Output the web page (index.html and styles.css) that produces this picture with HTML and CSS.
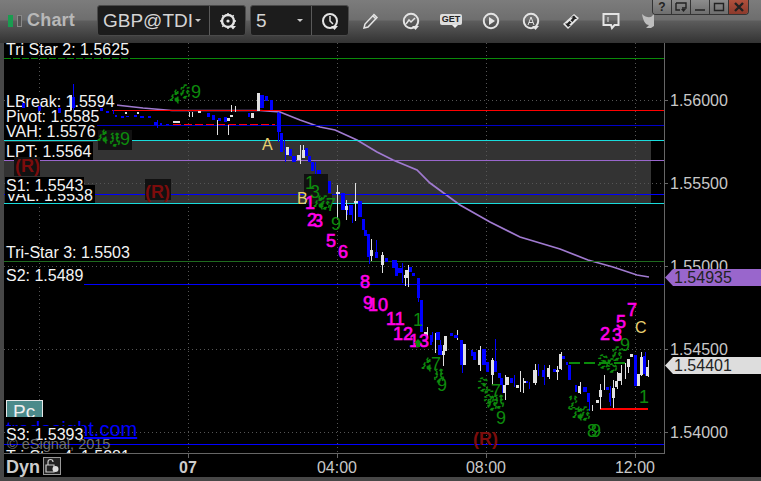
FILE: index.html
```html
<!DOCTYPE html>
<html lang="en">
<head>
<meta charset="utf-8">
<title>Chart</title>
<link rel="stylesheet" href="styles.css">
</head>
<body>
<div class="window">
  <header class="toolbar">
    <div class="leds"><span class="led led-on"></span><span class="led"></span></div>
    <div class="title">Chart</div>
    <div class="group group-symbol">
      <div class="field field-symbol"><span class="field-text">GBP@TDI</span><span class="caret"></span></div>
      <div class="tool">
        <svg class="ico" viewBox="0 0 18 18"><circle cx="9" cy="9" r="6" class="st24"/><circle cx="9" cy="9" r="1.600" class="fillw"/><path class="st15" d="M9 1v1.500M1 9h1.500M15.500 9H17M3.300 3.300l1 1M14.700 3.300l-1 1M4.300 13.700l-1 1M9 15.500V17"/><path class="fillw" d="M11 14h6l-3 3.500z"/></svg>
      </div>
    </div>
    <div class="group group-interval">
      <div class="field field-interval"><span class="field-text">5</span><span class="caret"></span></div>
      <div class="tool">
        <svg class="ico" viewBox="0 0 18 18"><circle cx="9" cy="9" r="7" class="st2"/><path class="st15" d="M9 4v5l3 3"/><path class="fillw" d="M10 14h7l-3.500 4z"/></svg>
      </div>
    </div>
    <div class="icons">
      <div class="cell"><svg class="ico" viewBox="0 0 18 18"><path class="st15" d="M2 16l1-4L12 2.500l3 3L6 15zM11 4l3 3"/></svg></div>
      <div class="cell"><svg class="ico" viewBox="0 0 18 18"><circle cx="9" cy="9" r="7.200" class="st2"/><path class="st15" d="M4 12l3-4 2 2 4-4"/><path class="fillw" d="M10 14h7l-3.500 4z"/></svg></div>
      <div class="cell cell-get"><span class="get">GET</span><span class="caret caret-get"></span></div>
      <div class="cell"><svg class="ico" viewBox="0 0 18 18"><circle cx="9" cy="9" r="7.200" class="st2"/><path class="fillw" d="M7 5l6 4-6 4z"/></svg></div>
      <div class="cell"><svg class="ico" viewBox="0 0 18 18"><circle cx="9" cy="9" r="7.200" class="st2"/><path class="st1" d="M6 13l3-8 3 8M7 10.500h4"/><path class="fillw" d="M10 14h7l-3.500 4z"/></svg></div>
      <div class="cell"><svg class="ico" viewBox="0 0 18 18"><path class="fillw" d="M1 12L12 2l5 4L6 17z"/><path class="filld" d="M12 3.500l3 3.500h-2l-2.500 3-2-1.500 2.500-3h-2zM6 15l-3-3.500h2l2.500-2.500 2 1.500-2.500 2.500h2z"/></svg></div>
      <div class="cell"><svg class="ico" viewBox="0 0 18 18"><path class="st2" d="M1.500 2h15v11h-4l-2.500 3-1-3h-7.500z"/><path class="st1" d="M6 5v5"/></svg></div>
      <div class="cell cell-bird"><svg class="ico" viewBox="0 0 18 18"><path class="fillg" d="M3 2c3 3 6 3.500 9 3l3-3v12l-3 2H7l3-3C6 13 4 8 3 2z"/></svg></div>
    </div>
    <div class="winbtns">
      <div class="winbtn">?</div>
      <div class="winbtn"><svg class="wico" viewBox="0 0 12 10"><path class="stb" d="M1 1h10v5H7M1 1v7h4"/><path class="fillb" d="M6 7h5l-2.500 3z"/></svg></div>
      <div class="winbtn"><svg class="wico" viewBox="0 0 12 10"><path class="stb" d="M1 8h10"/></svg></div>
      <div class="winbtn"><svg class="wico" viewBox="0 0 12 10"><path class="stb" d="M1.500 1.500h9v7h-9z"/></svg></div>
      <div class="winbtn winbtn-close"><svg class="wico" viewBox="0 0 12 10"><path class="stx" d="M2 1l8 8M10 1l-8 8"/></svg></div>
    </div>
  </header>
  <main class="chart">
    <svg class="canvas" viewBox="4 43 757 434" width="757" height="434">
      <defs><clipPath id="plot"><rect x="4" y="43" width="660" height="410"/></clipPath></defs>
      <rect class="band" x="4" y="140" width="647" height="63"/>
      <path class="grid" d="M39 43V453M188 43V453M337 43V453M486 43V453M635 43V453M4 100H664M4 183H664M4 266H664M4 349H664M4 432H664"/>

      <polyline class="ma" points="116,105 143,108 172,110.500 260,110.500 280,112 300,120 320,127 335,130 357,140 377,152 393,160 417,170 430,183 460,205 490,222 520,237 560,249 588,260 613,267 637,275 649,277"/>

      <g class="lines">
        <path class="l-green" d="M4 58.500H130"/><path class="l-green-d" d="M130 58.500H664"/>
        <path class="l-blue2" d="M97 125.500H664"/>
        <path class="l-red" d="M112 110.500H664"/>
        <path class="l-red-d" d="M173 124.500H275"/>
        <path class="l-cyan" d="M4 140.500H664"/>
        <path class="l-purple" d="M4 160.500H664"/>
        <path class="l-blue" d="M4 194.500H664"/>
        <path class="l-cyan" d="M4 203.500H664"/>
        <path class="l-tri" d="M4 261.500H664"/>
        <path class="l-blue" d="M84 284.500H664"/>
        <path class="l-blue" d="M4 444.500H664"/>
        <path class="l-green-dash" d="M569 362.500H630"/>
        <path class="l-red2" d="M600 408.500H648"/>
      </g>

      <g clip-path="url(#plot)">
        <rect class="pc" x="6.500" y="400.500" width="36" height="22"/>
        <text class="pc-text" x="13" y="418">Pc</text>
        <rect class="cover" x="4" y="417" width="140" height="8"/>
        <text class="site" x="6" y="436">tradesight.com</text>
        <g class="lab">
          <text x="6" y="55">Tri Star 2: 1.5625</text>
          <rect class="label-bg" x="5" y="94" width="112" height="15"/>
          <text x="6" y="107">LBreak: 1.5594</text>
          <rect class="label-bg" x="5" y="124" width="92" height="14"/>
          <text x="6" y="137">VAH: 1.5576</text>
          <rect class="label-bg" x="5" y="109" width="95" height="15"/>
          <text x="6" y="122">Pivot: 1.5585</text>
          <rect class="label-bg" x="5" y="142" width="88" height="18"/>
          <text x="6" y="157">LPT: 1.5564</text>
          <rect class="label-bg" x="5" y="185" width="90" height="18"/>
          <text x="6" y="201">VAL: 1.5538</text>
          <rect class="label-bg" x="5" y="177" width="79" height="17"/>
          <text x="6" y="191">S1: 1.5543</text>
          <text x="6" y="258">Tri-Star 3: 1.5503</text>
          <rect class="label-bg" x="5" y="268" width="80" height="16"/>
          <text x="6" y="281">S2: 1.5489</text>
          <rect class="label-bg" x="5" y="426" width="79" height="14"/>
          <text x="6" y="440">S3: 1.5393</text>
          <text x="6" y="462">Tri-Star 4: 1.5281</text>
        </g>
        <text class="copy" x="7" y="449">© eSignal, 2015</text>
      </g>

      <path class="wick-b" d="M73 84v26M157 120v8M113 110v4M284 150v-10M285 150v12M315 162v15M320 170v17M278 112v30M347 205v10M352 215v8M364 219v12M369 250v14M376 240v16M396 260v12M402 263v20M418 280v22M432 332v10M440 340v5M462 365v8M495 339v25M502 378v15M514 375v12M529 382v7M538 364v12M544 365v20M589 395v16M610 386v20M645 352v24"/>
      <path class="wick-w" d="M189 112v5M192 112v5M217 120v15M228 125v10M231 112v-7M235 112v-6M300 145v19M303 145v10M337 185v34M346 200v20M355 183v38M371 239v22M382 252v21M405 270v16M408 265v22M427 327v11M435 333v20M443 345v21M457 330v10M480 346v25M492 358v27M505 375v25M520 371v21M523 378v15M535 364v21M549 365v14M557 366v14M561 352v18M568 365v3M580 382v12M592 405v6M600 384v25M604 375v15M613 380v28M617 372v17M621 365v20M625 363v16M628 359v14M641 352v24M648 360v17"/>
      <path class="body-b" d="M72 97h3v11h-3zM22 103h3v5h-3zM38 106h3v5h-3zM58 108h3v5h-3zM100 108h3v3h-3zM106 111h3v2h-3zM115 115h2v2h-2zM121 116h3v2h-3zM126 116h3v1h-3zM134 115h3v2h-3zM140 116h4v2h-4zM148 116h3v2h-3zM154 122h3v3h-3zM160 123h2v2h-2zM166 124h3v1h-3zM207 113h3v4h-3zM212 115h3v5h-3zM218 118h3v3h-3zM224 117h3v5h-3zM248 113h2v4h-2zM260 95h4v13h-4zM265 96h3v5h-3zM270 100h3v10h-3zM277 113h4v19h-4zM280 133h3v19h-3zM289 149h3v7h-3zM292 156h4v6h-4zM305 148h3v8h-3zM308 156h3v6h-3zM311 162h3v9h-3zM317 170h3v10h-3zM322 178h3v5h-3zM327 181h4v12h-4zM341 193h4v17h-4zM349 205h4v10h-4zM358 201h4v16h-4zM362 219h3v11h-3zM364 230h3v6h-3zM367 234h3v23h-3zM375 252h3v6h-3zM385 258h3v4h-3zM392 260h4v8h-4zM395 263h3v13h-3zM398 268h4v5h-4zM409 267h3v5h-3zM412 273h3v3h-3zM417 278h3v20h-3zM420 300h3v32h-3zM430 335h2v10h-2zM436 332h4v8h-4zM438 345h4v10h-4zM450 333h3v3h-3zM454 335h4v3h-4zM460 340h3v25h-3zM471 350h2v6h-2zM473 352h3v8h-3zM478 352h3v10h-3zM482 349h4v16h-4zM486 362h3v10h-3zM493 361h4v11h-4zM498 373h3v5h-3zM500 378h3v7h-3zM510 378h3v5h-3zM525 381h3v2h-3zM542 370h3v7h-3zM553 369h3v3h-3zM562 356h3v3h-3zM566 362h2v3h-2zM568 365h3v15h-3zM575 385h2v7h-2zM583 387h4v5h-4zM587 393h3v9h-3zM606 387h3v3h-3zM609 393h2v9h-2zM634 355h3v31h-3zM643 356h2v18h-2z"/>
      <path class="body-w" d="M70 95h2v15h-2zM173 121h7v2h-7zM125 112h2v2h-2zM137 112h2v2h-2zM198 111h3v2h-3zM227 118h3v3h-3zM230 115h3v2h-3zM251 113h3v5h-3zM257 93h3v18h-3zM286 147h3v8h-3zM297 155h3v5h-3zM302 150h3v8h-3zM336 192h4v2h-4zM345 206h3v4h-3zM354 201h4v2h-4zM370 250h3v6h-3zM381 255h3v10h-3zM404 275h3v3h-3zM405 270h4v8h-4zM424 332h3v3h-3zM442 351h3v4h-3zM444 336h3v15h-3zM463 344h3v21h-3zM478 350h3v15h-3zM491 360h3v15h-3zM503 385h3v8h-3zM506 377h3v8h-3zM516 385h3v3h-3zM523 381h3v2h-3zM533 370h4v13h-4zM547 368h3v9h-3zM556 370h3v2h-3zM559 354h3v15h-3zM578 386h3v7h-3zM596 400h3v3h-3zM599 390h3v7h-3zM612 388h3v10h-3zM615 381h3v6h-3zM617 373h4v8h-4zM627 359h3v8h-3zM630 354h3v3h-3zM637 374h3v12h-3zM640 357h3v18h-3zM646 367h3v9h-3z"/>

      <g class="tnum green">
        <rect class="shade" x="304" y="174" width="24" height="20"/>
        <rect class="shade" x="98" y="130" width="34" height="20"/>
        <rect class="shade" x="306" y="194" width="26" height="10"/>
        <text class="frag" x="170" y="103">4</text><text class="frag" x="180" y="98">6</text><text x="191" y="98">9</text>
        <text class="frag" x="98" y="143">4</text><text class="frag" x="110" y="146">8</text><text x="120" y="145">9</text>
        <text x="305" y="189">1</text><text x="310" y="198">3</text><text class="frag" x="314" y="209">4</text><text class="frag" x="320" y="209">6</text><text x="326" y="211">7</text><text x="331" y="230">9</text>
        <text x="413" y="326">1</text><text class="frag" x="422" y="371">4</text><text x="431" y="370">7</text><text class="frag" x="434" y="382">8</text><text x="437" y="391">9</text>
        <text class="frag" x="478" y="391">3</text><text x="491" y="397">7</text><text class="frag" x="484" y="403">5</text><text class="frag" x="487" y="410">6</text><text class="frag" x="494" y="408">8</text><text x="496" y="424">9</text>
        <text class="frag" x="568" y="409">2</text><text class="frag" x="573" y="420">4</text><text class="frag" x="580" y="420">6</text><text x="587" y="437">8</text><text x="591" y="437">9</text>
        <text class="frag" x="598" y="368">3</text><text class="frag" x="607" y="372">5</text><text class="frag" x="612" y="360">6</text><text x="620" y="351">9</text><text x="639" y="403">1</text>
      </g>
      <g class="tnum magenta">
        <text x="305" y="209">1</text><text x="307" y="226">2</text><text x="313" y="227">3</text><text x="326" y="247">5</text><text x="338" y="258">6</text>
        <text x="360" y="288">8</text><text x="363" y="309">9</text><text x="368" y="311">10</text><text x="386" y="325">11</text><text x="393" y="340">12</text><text x="409" y="347">13</text>
        <text x="600" y="340">2</text><text x="612" y="341">3</text><text x="616" y="328">5</text><text x="627" y="316">7</text>
      </g>
      <path class="arrow" d="M418 339l4 4h-2v4h-4v-4h-2z"/>
      <text class="abc" x="262" y="150">A</text>
      <text class="abc" x="297" y="204">B</text>
      <text class="abc" x="635" y="333">C</text>

      <g class="r">
        <rect class="shade" x="14" y="157" width="26" height="19"/><text x="15" y="172">(R)</text>
        <rect class="shade" x="145" y="179" width="26" height="21"/><text x="145" y="198">(R)</text>
        <text x="473" y="445">(R)</text>
      </g>

      <path class="axis" d="M664.500 43V453.500H4M664 100h4M664 183h4M664 266h4M664 349h4M664 432h4M188.500 454v4M337.500 454v4M486.500 454v4M635.500 454v4"/>
      <g class="ax">
        <text x="670" y="106">1.56000</text>
        <text x="670" y="189">1.55500</text>
        <text x="670" y="272">1.55000</text>
        <text x="670" y="355">1.54500</text>
        <text x="670" y="438">1.54000</text>
        <text class="mid" x="337" y="473">04:00</text>
        <text class="mid" x="486" y="473">08:00</text>
        <text class="mid" x="635" y="473">12:00</text>
      </g>
      <text class="ax-b mid" x="188" y="473">07</text>
      <polygon class="tag-p" points="665,277.500 673,269 761,269 761,286 673,286"/>
      <text class="tag-t" x="674" y="283">1.54935</text>
      <polygon class="tag-w" points="665,365.500 673,357 761,357 761,374 673,374"/>
      <text class="tag-t" x="674" y="371">1.54401</text>

      <text class="dyn" x="6" y="473">Dyn</text>
      <rect class="lock" x="43.500" y="457.500" width="17" height="17"/>
      <path class="lock-i" d="M48 465v-3a2.500 2.500 0 0 1 5 0M46 465h8v7h-8z"/>
      <circle class="lock-c" cx="55.500" cy="469" r="3"/>
    </svg>
  </main>
</div>
</body>
</html>
```
FILE: styles.css
```css
html, body { margin: 0; padding: 0; height: 100%; background: #3c3c3c; overflow: hidden; }
body { font-family: "Liberation Sans", Arial, sans-serif; }
.window { width: 761px; height: 481px; display: flex; flex-direction: column; background: #474747; position: relative; }

.toolbar { height: 43px; flex: none; display: flex; align-items: center; padding: 0 0 2px 8px; box-sizing: border-box;
  background: linear-gradient(#7c7c7c 0, #6e6e6e 20px, #5c5c5c 21px, #333 43px); }
.leds { display: flex; gap: 4px; width: 19px; flex: none; }
.led { width: 5px; height: 12px; background: #555; box-shadow: inset 0 0 0 1px #888; }
.led-on { background: #1a9c50; box-shadow: none; }
.title { width: 70px; flex: none; font-size: 18px; font-weight: bold; color: #b8b8b8; letter-spacing: 0.2px; }
.group { height: 31px; box-sizing: border-box; display: flex; flex: none; background: #1c1c1c; border: 1px solid #4a4a4a; border-radius: 3px; }
.group-symbol { width: 149px; margin-right: 4px; }
.group-interval { width: 99px; }
.field { display: flex; align-items: center; justify-content: space-between; box-sizing: border-box; border-right: 1px solid #5a5a5a; padding: 0 8px 0 5px; color: #d4d4d4; }
.field-symbol { width: 112px; }
.field-interval { width: 61px; }
.field-text { font-size: 19px; }
.caret { width: 0; height: 0; border: 3px solid transparent; border-top: 3px solid #ccc; border-bottom: 0; }
.tool { flex: 1; display: flex; align-items: center; justify-content: center; }
.ico { width: 18px; height: 18px; display: block; }
.icons { display: flex; flex: none; margin-left: 2px; }
.cell { width: 40px; display: flex; justify-content: center; align-items: center; }
.cell-bird { transform: translateX(-3px); }
.cell-get { flex-direction: column; }
.get { background: #ddd; color: #222; font-size: 9px; font-weight: bold; padding: 1px 2px; border-radius: 2px; line-height: 9px; }
.caret-get { border-top-color: #eee; margin-left: 8px; }
.st1, .st15, .st2, .st24, .stb, .stx { fill: none; stroke: #e4e4e4; }
.st1 { stroke-width: 1; } .st15 { stroke-width: 1.5; } .st2 { stroke-width: 2; } .st24 { stroke-width: 2.4; }
.fillw { fill: #e6e6e6; } .filld { fill: #222; } .fillg { fill: #bdbdbd; }
.stb { stroke: #222; stroke-width: 1.4; } .fillb { fill: #222; } .stx { stroke: #222; stroke-width: 2.4; }

.winbtns { position: absolute; top: 0; left: 652px; display: flex; height: 14px; border: 1px solid #333; border-top: 0; border-radius: 0 0 4px 4px; overflow: hidden; }
.winbtn { width: 19px; height: 14px; box-sizing: border-box; border-right: 1px solid #333; background: linear-gradient(#8c8c8c, #6e6e6e); color: #222; font-size: 12px; font-weight: bold; line-height: 13px; text-align: center; display: flex; align-items: center; justify-content: center; }
.winbtn:last-child { border-right: 0; }
.winbtn-close { background: linear-gradient(#b0503c, #8c3a2c); }
.wico { width: 12px; height: 10px; display: block; }

.chart { flex: none; height: 434px; padding-left: 4px; background: #474747; }
.canvas { display: block; background: #000; }
.band { fill: #333; }
.grid { stroke: #555; stroke-width: 1; stroke-dasharray: 1 3; fill: none; shape-rendering: crispEdges; }
.lines path { fill: none; stroke-width: 1; shape-rendering: crispEdges; }
.lines .l-green { stroke: #0a8a0a; stroke-dasharray: 7 2; }
.lines .l-green-d { stroke: #0a8a0a; }
.lines .l-blue { stroke: #0000ff; }
.lines .l-blue2 { stroke: #0000c8; }
.lines .l-red { stroke: #ff0000; }
.lines .l-red-d { stroke: #ff0000; stroke-dasharray: 8 3; }
.lines .l-cyan { stroke: #19dcdc; }
.lines .l-purple { stroke: #9966cc; }
.lines .l-tri { stroke: #1f6a1f; }
.lines .l-green-dash { stroke: #0a8a0a; stroke-width: 2; stroke-dasharray: 11 4; }
.lines .l-red2 { stroke: #ff0000; stroke-width: 2; }
.ma { fill: none; stroke: #a07ad0; stroke-width: 1.700; }
.wick-b { stroke: #0000ff; stroke-width: 1; fill: none; shape-rendering: crispEdges; }
.wick-w { stroke: #e0e0e0; stroke-width: 1; fill: none; shape-rendering: crispEdges; }
.body-b { fill: #0000ff; shape-rendering: crispEdges; }
.body-w { fill: #e0e0e0; shape-rendering: crispEdges; }

text { font-family: "Liberation Sans", Arial, sans-serif; }
.tnum text { font-size: 18px; }
.green text { fill: #0d8a0d; }
.green .frag { fill: none; stroke: #0d8a0d; stroke-width: 1.400; stroke-dasharray: 3 2.500; }
.magenta text { fill: #ff00e6; stroke: #ff00e6; stroke-width: 0.600; font-size: 18px; }
.shade { fill: #111; }
.arrow { fill: #0d8a0d; }
.abc { font-size: 16px; fill: #e8d070; }
.r text { font-size: 18px; font-weight: bold; fill: #7c0c0c; }
.pc { fill: #4b8a8a; stroke: #e8e8e8; stroke-width: 1; }
.pc-text { font-size: 19px; fill: #eee; }
.cover { fill: #000; }
.site { font-size: 20px; fill: #0000ff; text-decoration: underline; }
.lab text { font-size: 16px; fill: #f4f4f4; }
.label-bg { fill: #000; }
.copy { font-size: 14.500px; fill: #707070; }
.axis { fill: none; stroke: #666; stroke-width: 1; shape-rendering: crispEdges; }
.ax text { font-size: 16px; fill: #c8c8c8; }
.mid { text-anchor: middle; }
.ax-b { font-size: 16px; font-weight: bold; fill: #ccc; }
.tag-p { fill: #9966cc; }
.tag-w { fill: #ddd; }
.tag-t { font-size: 16px; fill: #222; }
.dyn { font-size: 18px; font-weight: bold; fill: #ccc; }
.lock { fill: #222; stroke: #999; stroke-width: 1; }
.lock-i { fill: none; stroke: #ccc; stroke-width: 1.200; }
.lock-c { fill: #ddd; }
```
